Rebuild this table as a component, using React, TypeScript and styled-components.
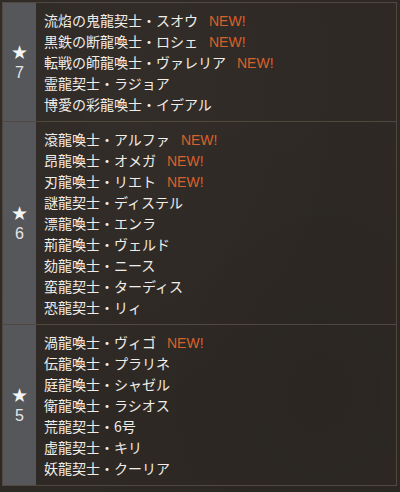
import styled, { createGlobalStyle } from "styled-components";

type Unit = { name: string; isNew?: boolean };
type Rank = { stars: number; units: Unit[] };

const ranks: Rank[] = [
  {
    stars: 7,
    units: [
      { name: "流焰の鬼龍契士・スオウ", isNew: true },
      { name: "黒鉄の断龍喚士・ロシェ", isNew: true },
      { name: "転戦の師龍喚士・ヴァレリア", isNew: true },
      { name: "霊龍契士・ラジョア" },
      { name: "博愛の彩龍喚士・イデアル" },
    ],
  },
  {
    stars: 6,
    units: [
      { name: "滾龍喚士・アルファ", isNew: true },
      { name: "昂龍喚士・オメガ", isNew: true },
      { name: "刃龍喚士・リエト", isNew: true },
      { name: "謎龍契士・ディステル" },
      { name: "漂龍喚士・エンラ" },
      { name: "荊龍喚士・ヴェルド" },
      { name: "劾龍喚士・ニース" },
      { name: "蛮龍契士・ターディス" },
      { name: "恐龍契士・リィ" },
    ],
  },
  {
    stars: 5,
    units: [
      { name: "渦龍喚士・ヴィゴ", isNew: true },
      { name: "伝龍喚士・プラリネ" },
      { name: "庭龍喚士・シャゼル" },
      { name: "衛龍喚士・ラシオス" },
      { name: "荒龍契士・6号" },
      { name: "虚龍契士・キリ" },
      { name: "妖龍契士・クーリア" },
    ],
  },
];

const GlobalStyle = createGlobalStyle`
  html, body {
    margin: 0;
    padding: 0;
    background-color: #2e2924;
    background-image:
      radial-gradient(ellipse at 30% 20%, rgba(255,255,255,0.02), transparent 60%),
      radial-gradient(ellipse at 80% 80%, rgba(0,0,0,0.08), transparent 60%);
  }
  body {
    font-family: "Noto Sans CJK JP", "Noto Sans", sans-serif;
  }
`;

const Page = styled.div`
  width: 400px;
  height: 492px;
  box-sizing: border-box;
  padding: 2px 3px 4px 2px;
`;

const Table = styled.div`
  border: 1px solid #4f483f;
  display: flex;
  flex-direction: column;
`;

const Section = styled.div`
  display: grid;
  grid-template-columns: 33px 1fr;
  & + & {
    border-top: 1px solid #4f483f;
  }
`;

const RankCell = styled.div`
  background: #55575a;
  display: flex;
  flex-direction: column;
  align-items: center;
  justify-content: center;
  color: #f4f4f4;
`;

const Star = styled.span`
  font-family: "DejaVu Sans", sans-serif;
  font-size: 19px;
  line-height: 21px;
`;

const RankNum = styled.span`
  font-family: "Liberation Sans", Arial, sans-serif;
  font-size: 16px;
  line-height: 20px;
  color: #e6e6e6;
`;

const List = styled.ul`
  list-style: none;
  margin: 0;
  padding: 7px 0 6px 8px;
`;

const Row = styled.li`
  font-size: 14px;
  line-height: 21px;
  height: 21px;
  color: #f1ede8;
  white-space: nowrap;
`;

const NewMark = styled.span`
  font-family: "Liberation Sans", Arial, sans-serif;
  font-size: 14px;
  color: #d9612c;
  margin-left: 11px;
`;

export default function App() {
  return (
    <>
      <GlobalStyle />
      <Page>
        <Table>
          {ranks.map((rank) => (
            <Section key={rank.stars}>
              <RankCell>
                <Star>★</Star>
                <RankNum>{rank.stars}</RankNum>
              </RankCell>
              <List>
                {rank.units.map((u) => (
                  <Row key={u.name}>
                    {u.name}
                    {u.isNew && <NewMark>NEW!</NewMark>}
                  </Row>
                ))}
              </List>
            </Section>
          ))}
        </Table>
      </Page>
    </>
  );
}
